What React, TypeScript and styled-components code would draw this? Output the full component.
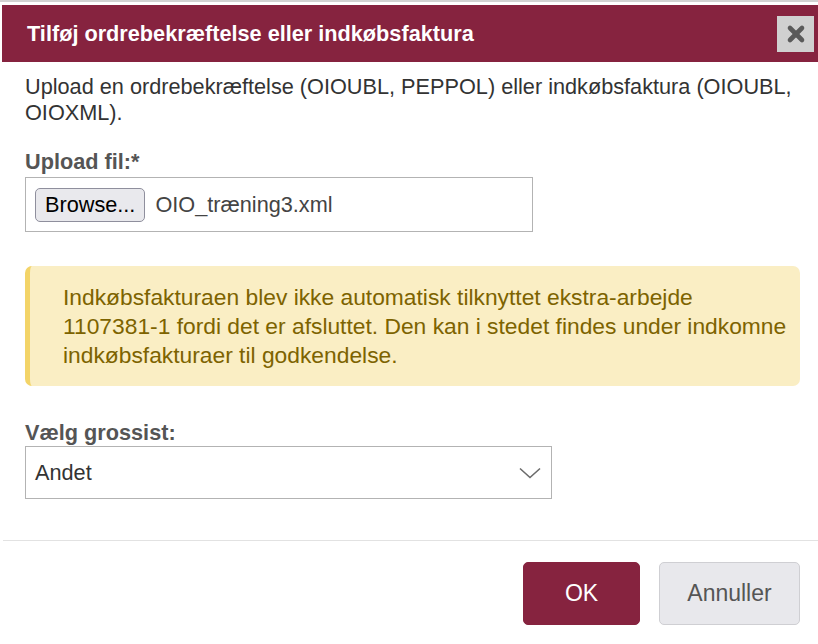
import React from "react";
import styled, { createGlobalStyle } from "styled-components";

const GlobalStyle = createGlobalStyle`
  html, body { margin: 0; padding: 0; background: #ffffff; }
  body { font-family: "Liberation Sans", Arial, Helvetica, sans-serif; }
  * { box-sizing: border-box; }
`;

const Page = styled.div`
  width: 818px;
  height: 644px;
  overflow: hidden;
  background: #ffffff;
`;

const BackdropEdge = styled.div`
  height: 2px;
  background: #d2d2d2;
  margin-bottom: 3px;
`;

const Dialog = styled.div`
  margin-left: 2px;
  display: flex;
  flex-direction: column;
`;

const Header = styled.div`
  height: 57px;
  background: #86233f;
  display: flex;
  align-items: center;
  justify-content: space-between;
  padding: 0 4px 0 25px;
`;

const Title = styled.h1`
  margin: 0;
  color: #ffffff;
  font-size: 21.7px;
  font-weight: bold;
`;

const CloseButton = styled.button`
  width: 37px;
  height: 36px;
  border: none;
  background: #d0d0d0;
  padding: 0;
  display: flex;
  align-items: center;
  justify-content: center;
  cursor: pointer;
`;

const Body = styled.div`
  padding: 12px 23px 0 23px;
  display: flex;
  flex-direction: column;
`;

const Description = styled.p`
  margin: 0;
  font-size: 21.7px;
  line-height: 26px;
  color: #333333;
`;

const Label = styled.label<{ $top: number; $bottom: number }>`
  display: block;
  margin: ${(p) => p.$top}px 0 ${(p) => p.$bottom}px 0;
  font-size: 21.7px;
  line-height: 26px;
  font-weight: bold;
  color: #555555;
`;

const FileBox = styled.div`
  width: 508px;
  height: 55px;
  border: 1px solid #b3b3b3;
  display: flex;
  align-items: center;
  gap: 10px;
  padding: 0 9px;
`;

const BrowseButton = styled.button`
  height: 34px;
  padding: 0 9px;
  border: 1px solid #8f8f9d;
  border-radius: 5px;
  background: #e9e9ed;
  color: #000000;
  font-family: inherit;
  font-size: 21.7px;
`;

const FileName = styled.span`
  font-size: 21.7px;
  color: #444444;
`;

const Alert = styled.div`
  margin-top: 34px;
  width: 775px;
  border-left: 5px solid #f3d468;
  border-radius: 7px;
  background: #faeec4;
  padding: 17px 8px 16px 33px;
  color: #7d6300;
  font-size: 22.8px;
  line-height: 29px;
`;

const SelectWrap = styled.div`
  width: 527px;
  height: 53px;
  border: 1px solid #b3b3b3;
  display: flex;
  align-items: center;
  justify-content: space-between;
  padding: 0 10px 0 9px;
  font-size: 21.7px;
  color: #333333;
`;

const Divider = styled.div`
  margin-top: 41px;
  margin-left: 1px;
  height: 1px;
  background: #e2e2e2;
`;

const Footer = styled.div`
  display: flex;
  justify-content: flex-end;
  gap: 19px;
  padding: 21px 18px 0 0;
`;

const FooterButton = styled.button<{ $primary?: boolean }>`
  height: 63px;
  width: ${(p) => (p.$primary ? "117px" : "141px")};
  border-radius: 5px;
  border: 1px solid ${(p) => (p.$primary ? "#86233f" : "#cfcfd3")};
  background: ${(p) => (p.$primary ? "#86233f" : "#e8e8ec")};
  color: ${(p) => (p.$primary ? "#ffffff" : "#555555")};
  font-family: inherit;
  font-size: 23px;
  cursor: pointer;
`;

const CloseIcon = () => (
  <svg width="20" height="20" viewBox="0 0 20 20">
    <g stroke="#5a5a5a" strokeWidth="4.6" strokeLinecap="round">
      <line x1="4" y1="4" x2="16" y2="16" />
      <line x1="16" y1="4" x2="4" y2="16" />
    </g>
  </svg>
);

const Chevron = () => (
  <svg width="22" height="12" viewBox="0 0 22 12">
    <polyline points="1,1.5 11,10.5 21,1.5" fill="none" stroke="#6b6b6b" strokeWidth="1.6" />
  </svg>
);

export default function App() {
  return (
    <Page>
      <GlobalStyle />
      <BackdropEdge />
      <Dialog>
        <Header>
          <Title>Tilføj ordrebekræftelse eller indkøbsfaktura</Title>
          <CloseButton aria-label="Luk">
            <CloseIcon />
          </CloseButton>
        </Header>
        <Body>
          <Description>
            Upload en ordrebekræftelse (OIOUBL, PEPPOL) eller indkøbsfaktura (OIOUBL,
            OIOXML).
          </Description>
          <Label $top={23} $bottom={2}>Upload fil:*</Label>
          <FileBox>
            <BrowseButton>Browse...</BrowseButton>
            <FileName>OIO_træning3.xml</FileName>
          </FileBox>
          <Alert>
            Indkøbsfakturaen blev ikke automatisk tilknyttet ekstra-arbejde 1107381-1 fordi det er
            afsluttet. Den kan i stedet findes under indkomne indkøbsfakturaer til godkendelse.
          </Alert>
          <Label $top={34} $bottom={0}>Vælg grossist:</Label>
          <SelectWrap>
            <span>Andet</span>
            <Chevron />
          </SelectWrap>
        </Body>
        <Divider />
        <Footer>
          <FooterButton $primary>OK</FooterButton>
          <FooterButton>Annuller</FooterButton>
        </Footer>
      </Dialog>
    </Page>
  );
}
